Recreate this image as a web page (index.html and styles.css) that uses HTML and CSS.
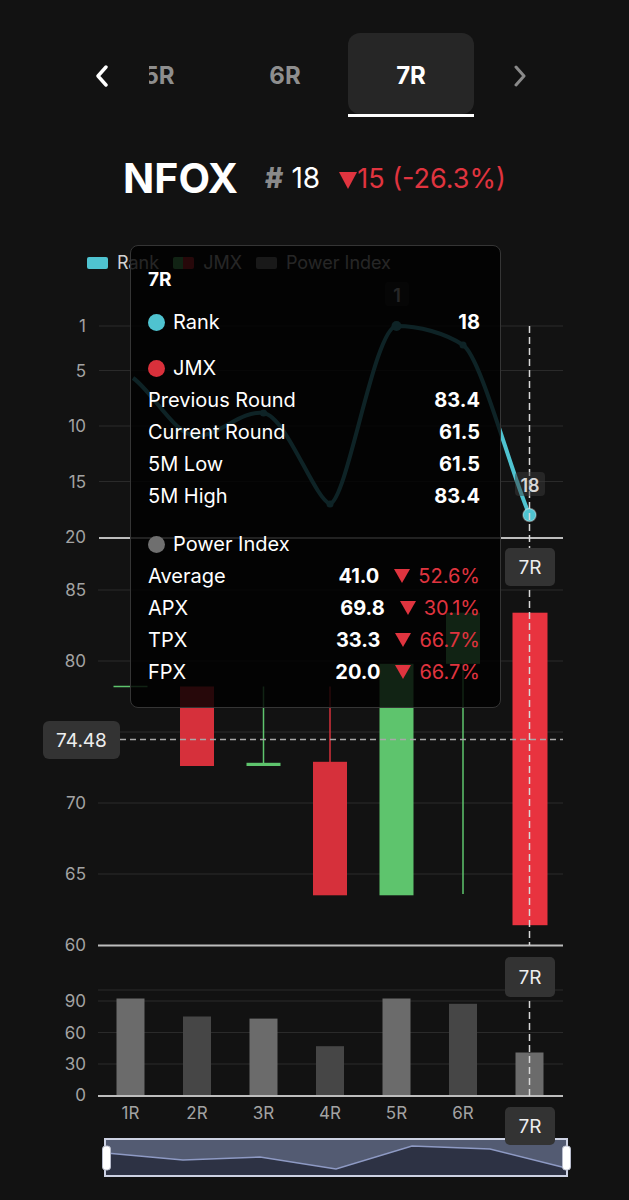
FILE: index.html
```html
<!DOCTYPE html>
<html lang="en">
<head>
    <meta charset="UTF-8">
    <meta name="viewport" content="width=device-width, initial-scale=1.0">
    <title>NFOX</title>
    <link rel="stylesheet" href="styles.css">
</head>
<body>
<div class="page">
    <nav class="round-nav">
        <button class="nav-arrow">
            <svg width="16" height="22" viewBox="0 0 16 22"><path d="M12 2 L4 11 L12 20" fill="none" stroke="#fff" stroke-width="3.4" stroke-linecap="round" stroke-linejoin="round"/></svg>
        </button>
        <div class="tabs">
            <div class="tabs-track">
                <div class="tab">5R</div>
                <div class="tab">6R</div>
                <div class="tab active">7R</div>
            </div>
        </div>
        <button class="nav-arrow next">
            <svg width="16" height="22" viewBox="0 0 16 22"><path d="M4 2 L12 11 L4 20" fill="none" stroke="#8a8a8a" stroke-width="3" stroke-linecap="round" stroke-linejoin="round"/></svg>
        </button>
    </nav>

    <h1 class="title">
        <span class="ticker">NFOX</span>
        <span class="meta">
            <span class="hash">#</span><span class="rank-num">18</span>
            <span class="delta"><svg class="tri-big" width="18" height="17" viewBox="0 0 18 17"><polygon points="0,0 18,0 9,17" fill="#e0343f"/></svg>15 (-26.3%)</span>
        </span>
    </h1>

    <div class="chart">
        <div class="legend">
            <div class="legend-item"><span class="swatch swatch-rank"></span>Rank</div>
            <div class="legend-item"><span class="swatch swatch-jmx"></span>JMX</div>
            <div class="legend-item"><span class="swatch swatch-pi"></span>Power Index</div>
        </div>

        <svg class="plot" width="629" height="910" viewBox="0 280 629 910">
            <!-- rank grid -->
            <g class="grid">
                <line x1="99" y1="326" x2="563" y2="326"/>
                <line x1="99" y1="370.5" x2="563" y2="370.5"/>
                <line x1="99" y1="426" x2="563" y2="426"/>
                <line x1="99" y1="481.5" x2="563" y2="481.5"/>
            </g>
            <line class="axis" x1="99" y1="538" x2="563" y2="538"/>
            <g class="ylabel">
                <text x="86" y="326">1</text>
                <text x="86" y="370.5">5</text>
                <text x="86" y="426">10</text>
                <text x="86" y="481.5">15</text>
                <text x="86" y="537">20</text>
            </g>

            <!-- rank line -->
            <path class="rank-line" d="M133,378 C153,392 175,436 197,436 C219,436 241,410 263.5,413 C286,416 314,498 330,504 C348,498 374,328 396.5,326 C419,326 445,333 463,345 C481,357 510,470 529.5,515"/>
            <g class="rank-dot">
                <circle cx="197" cy="436" r="3.5"/>
                <circle cx="263.5" cy="413" r="3.5"/>
                <circle cx="330" cy="504" r="3.5"/>
                <circle cx="396.5" cy="326" r="5"/>
                <circle cx="463" cy="345" r="3.5"/>
            </g>
            <circle class="rank-focus" cx="529.5" cy="515" r="6.5"/>
            <rect class="point-tag" x="385" y="282" width="24" height="24" rx="4"/>
            <text class="point-label" x="397" y="295">1</text>

            <!-- candle grid -->
            <g class="grid">
                <line x1="98" y1="590" x2="563" y2="590"/>
                <line x1="98" y1="661" x2="563" y2="661"/>
                <line x1="98" y1="732" x2="563" y2="732"/>
                <line x1="98" y1="803" x2="563" y2="803"/>
                <line x1="98" y1="874" x2="563" y2="874"/>
            </g>
            <line class="axis" x1="98" y1="945.5" x2="563" y2="945.5"/>
            <g class="ylabel">
                <text x="86" y="590">85</text>
                <text x="86" y="661">80</text>
                <text x="86" y="803">70</text>
                <text x="86" y="874">65</text>
                <text x="86" y="945">60</text>
            </g>

            <!-- candles -->
            <line class="wick up" x1="113.5" y1="686.5" x2="147.5" y2="686.5" stroke-width="2.2"/>
            <rect class="down" x="180" y="686.5" width="34" height="79.5"/>
            <line class="wick up" x1="263.5" y1="686.5" x2="263.5" y2="764"/>
            <rect class="up" x="246.5" y="762.8" width="34" height="3.2"/>
            <line class="wick down-w" x1="330" y1="686.5" x2="330" y2="762"/>
            <rect class="down" x="313" y="761.8" width="34" height="133.5"/>
            <rect class="up" x="379.5" y="663.8" width="34" height="231.5"/>
            <rect class="up" x="446" y="612.7" width="34" height="51.1"/>
            <line class="wick up" x1="463" y1="663.8" x2="463" y2="894"/>
            <rect class="down focus" x="512.5" y="612.7" width="35" height="312.5"/>

            <line class="mark-line" x1="120" y1="739.5" x2="563" y2="739.5"/>

            <!-- power index bars -->
            <g class="grid">
                <line x1="98" y1="990" x2="563" y2="990"/>
                <line x1="98" y1="1001" x2="563" y2="1001"/>
                <line x1="98" y1="1032.5" x2="563" y2="1032.5"/>
                <line x1="98" y1="1064" x2="563" y2="1064"/>
            </g>
            <g class="ylabel">
                <text x="86" y="1001">90</text>
                <text x="86" y="1032.5">60</text>
                <text x="86" y="1064">30</text>
                <text x="86" y="1095">0</text>
            </g>
            <rect class="bar light" x="116.5" y="998.5" width="28" height="97.5"/>
            <rect class="bar dark" x="183" y="1016.5" width="28" height="79.5"/>
            <rect class="bar light" x="249.5" y="1018.6" width="28" height="77.4"/>
            <rect class="bar dark" x="316" y="1046.2" width="28" height="49.8"/>
            <rect class="bar light" x="382.5" y="998.5" width="28" height="97.5"/>
            <rect class="bar dark" x="449" y="1003.8" width="28" height="92.2"/>
            <rect class="bar light" x="515.5" y="1052.5" width="28" height="43.5"/>
            <line class="axis" x1="98" y1="1096" x2="563" y2="1096"/>

            <g class="xlabel">
                <text x="130.5" y="1113">1R</text>
                <text x="197" y="1113">2R</text>
                <text x="263.5" y="1113">3R</text>
                <text x="330" y="1113">4R</text>
                <text x="396.5" y="1113">5R</text>
                <text x="463" y="1113">6R</text>
            </g>

            <!-- zoom slider -->
            <rect class="slider" x="105" y="1139" width="462" height="37"/>
            <polygon class="slider-area" points="106,1153 183,1160 260,1157 336,1169 412,1146 490,1149 566,1168 566,1175 106,1175"/>
            <polyline class="slider-line" points="106,1153 183,1160 260,1157 336,1169 412,1146 490,1149 566,1168"/>
            <rect class="slider-frame" x="105" y="1139" width="462" height="37"/>
            <rect class="handle" x="102.5" y="1146" width="8" height="24" rx="3"/>
            <rect class="handle" x="562.5" y="1146" width="8" height="24" rx="3"/>

            <!-- crosshair -->
            <line class="cross" x1="529.5" y1="326" x2="529.5" y2="945"/>
            <line class="cross" x1="529.5" y1="990" x2="529.5" y2="1096"/>

            <rect class="point-tag" x="515" y="472" width="30" height="24" rx="4"/>
            <text class="point-label" x="530" y="485">18</text>

            <!-- axis pointer labels -->
            <rect class="pointer" x="505" y="548" width="50" height="38" rx="5"/>
            <text class="pointer-text" x="530" y="567.5">7R</text>
            <rect class="pointer" x="505" y="957" width="50" height="40" rx="5"/>
            <text class="pointer-text" x="530" y="977">7R</text>
            <rect class="pointer" x="505" y="1107" width="50" height="38" rx="5"/>
            <text class="pointer-text" x="530" y="1126.5">7R</text>
            <rect class="pointer" x="43" y="721" width="77" height="38" rx="6"/>
            <text class="pointer-text" x="81.5" y="740.5">74.48</text>
        </svg>

        <div class="tooltip">
            <div class="tip-head">7R</div>
            <div class="tip-group">
                <div class="tip-row"><span class="tip-dot dot-rank"></span><span class="tip-label">Rank</span><span class="tip-value">18</span></div>
            </div>
            <div class="tip-group">
                <div class="tip-row"><span class="tip-dot dot-jmx"></span><span class="tip-label">JMX</span></div>
                <div class="tip-row"><span class="tip-label">Previous Round</span><span class="tip-value">83.4</span></div>
                <div class="tip-row"><span class="tip-label">Current Round</span><span class="tip-value">61.5</span></div>
                <div class="tip-row"><span class="tip-label">5M Low</span><span class="tip-value">61.5</span></div>
                <div class="tip-row"><span class="tip-label">5M High</span><span class="tip-value">83.4</span></div>
            </div>
            <div class="tip-group last">
                <div class="tip-row"><span class="tip-dot dot-pi"></span><span class="tip-label">Power Index</span></div>
                <div class="tip-row"><span class="tip-label">Average</span><span class="tip-value">41.0</span><span class="tip-chg"><svg width="16" height="14" viewBox="0 0 16 14"><polygon points="0,0 16,0 8,14" fill="#e0343f"/></svg>52.6%</span></div>
                <div class="tip-row"><span class="tip-label">APX</span><span class="tip-value">69.8</span><span class="tip-chg"><svg width="16" height="14" viewBox="0 0 16 14"><polygon points="0,0 16,0 8,14" fill="#e0343f"/></svg>30.1%</span></div>
                <div class="tip-row"><span class="tip-label">TPX</span><span class="tip-value">33.3</span><span class="tip-chg"><svg width="16" height="14" viewBox="0 0 16 14"><polygon points="0,0 16,0 8,14" fill="#e0343f"/></svg>66.7%</span></div>
                <div class="tip-row"><span class="tip-label">FPX</span><span class="tip-value">20.0</span><span class="tip-chg"><svg width="16" height="14" viewBox="0 0 16 14"><polygon points="0,0 16,0 8,14" fill="#e0343f"/></svg>66.7%</span></div>
            </div>
        </div>
    </div>
</div>
</body>
</html>
```

FILE: styles.css
```css
html, body {
    margin: 0;
    background: #121212;
}
body {
    font-family: Inter, "Liberation Sans", sans-serif;
    color: #fff;
}
.page {
    width: 629px;
}

/* round tabs */
.round-nav {
    display: flex;
    align-items: flex-start;
    padding: 33px 0 0 82px;
    height: 81px;
}
.nav-arrow {
    width: 40px;
    height: 81px;
    padding: 4px 0 0;
    border: none;
    background: none;
    display: flex;
    align-items: center;
    justify-content: center;
}
.nav-arrow.next {
    margin-left: 10px;
}
.tabs {
    width: 341px;
    height: 84px;
    margin-left: 27px;
    overflow: hidden;
}
.tabs-track {
    display: flex;
    margin-left: -53px;
}
.tab {
    flex: 0 0 126px;
    height: 81px;
    box-sizing: border-box;
    padding-top: 4px;
    display: flex;
    align-items: center;
    justify-content: center;
    font-size: 24px;
    font-weight: 700;
    color: #8e8e8e;
    border-radius: 12px;
    position: relative;
}
.tab.active {
    background: #262626;
    color: #fff;
}
.tab.active::after {
    content: "";
    position: absolute;
    left: 0;
    right: 0;
    bottom: -3px;
    height: 3px;
    background: #fff;
}

/* title */
.title {
    margin: 40px 0 0;
    height: 48px;
    display: flex;
    align-items: center;
    justify-content: center;
    font-weight: 400;
    line-height: 1;
}
.ticker {
    font-size: 41px;
    font-weight: 700;
    margin-right: 27px;
}
.meta {
    display: flex;
    align-items: baseline;
}
.hash {
    font-size: 28px;
    font-weight: 800;
    color: #8a8a8a;
    margin-right: 8px;
}
.rank-num {
    font-size: 28px;
}
.delta {
    font-size: 27px;
    color: #e0343f;
    margin-left: 19px;
}
.tri-big {
    vertical-align: -1px;
}

/* chart */
.chart {
    position: relative;
    margin-top: 38px;
    padding-top: 13px;
}
.legend {
    display: flex;
    align-items: center;
    gap: 14px;
    padding-left: 87px;
    height: 20px;
    font-size: 18px;
    line-height: 20px;
    color: #d2d2d2;
}
.legend-item {
    display: flex;
    align-items: center;
    gap: 9px;
}
.swatch {
    width: 21px;
    height: 12px;
    border-radius: 2px;
}
.swatch-rank {
    background: #4fc3d0;
}
.swatch-jmx {
    background: linear-gradient(90deg, #5ec46d 50%, #d6303b 50%);
}
.swatch-pi {
    background: #8a8a8a;
}
.plot {
    display: block;
    margin-top: 7px;
}
.plot text {
    font-family: Inter, "Liberation Sans", sans-serif;
    dominant-baseline: central;
}
.grid line {
    stroke: #2a2a2a;
    stroke-width: 1;
}
.axis {
    stroke: #bdbdbd;
    stroke-width: 2;
}
.ylabel text {
    font-size: 17px;
    fill: #a3a3a3;
    text-anchor: end;
}
.xlabel text {
    font-size: 17px;
    fill: #a3a3a3;
    text-anchor: middle;
}
.rank-line {
    fill: none;
    stroke: #4fc3d0;
    stroke-width: 4;
    stroke-linejoin: round;
}
.rank-dot circle {
    fill: #4fc3d0;
}
.rank-focus {
    fill: #4fc3d0;
    stroke: rgba(255, 255, 255, 0.35);
    stroke-width: 1.5;
}
.point-tag {
    fill: rgba(58, 58, 58, 0.5);
}
.point-label {
    font-size: 18px;
    font-weight: 600;
    fill: #d8d8d8;
    text-anchor: middle;
}
.up {
    fill: #5ec46d;
}
.down {
    fill: #d6303b;
}
.down.focus {
    fill: #e8333f;
}
.wick {
    stroke-width: 1.5;
}
.wick.up {
    stroke: #5ec46d;
}
.wick.down-w {
    stroke: #d6303b;
}
.mark-line {
    stroke: #a8a8a8;
    stroke-width: 1.5;
    stroke-dasharray: 6 4;
}
.bar.light {
    fill: #6b6b6b;
}
.bar.dark {
    fill: #464646;
}
.slider {
    fill: #535b72;
}
.slider-area {
    fill: #2d3244;
}
.slider-line {
    fill: none;
    stroke: #8e9ac4;
    stroke-width: 1.5;
}
.slider-frame {
    fill: none;
    stroke: #cdd2e3;
    stroke-width: 2;
}
.handle {
    fill: #fff;
    stroke: #b8bccc;
    stroke-width: 1;
}
.cross {
    stroke: #d8d8d8;
    stroke-width: 1.5;
    stroke-dasharray: 7 4;
}
.pointer {
    fill: #333;
}
.pointer-text {
    font-size: 19px;
    fill: #eee;
    text-anchor: middle;
}

/* tooltip */
.tooltip {
    position: absolute;
    top: 5px;
    left: 130px;
    width: 371px;
    box-sizing: border-box;
    padding: 22px 20px 19px 17px;
    background: rgba(0, 0, 0, 0.82);
    border: 1px solid #353535;
    border-radius: 8px;
    font-size: 20px;
    color: #fff;
}
.tip-head {
    font-size: 19px;
    font-weight: 700;
    line-height: 24px;
}
.tip-group {
    margin-top: 14px;
}
.tip-group.last {
    margin-top: 16px;
}
.tip-row {
    display: flex;
    align-items: center;
    height: 32px;
    line-height: 32px;
}
.tip-label {
    flex: 1;
}
.tip-value {
    font-weight: 700;
}
.tip-dot {
    width: 17px;
    height: 17px;
    border-radius: 50%;
    margin-right: 8px;
}
.dot-rank {
    background: #4fc3d0;
}
.dot-jmx {
    background: #d9303b;
}
.dot-pi {
    background: #6f6f6f;
}
.tip-chg {
    display: flex;
    align-items: center;
    margin-left: 15px;
    color: #e0343f;
}
.tip-chg svg {
    margin-right: 8px;
}
```
